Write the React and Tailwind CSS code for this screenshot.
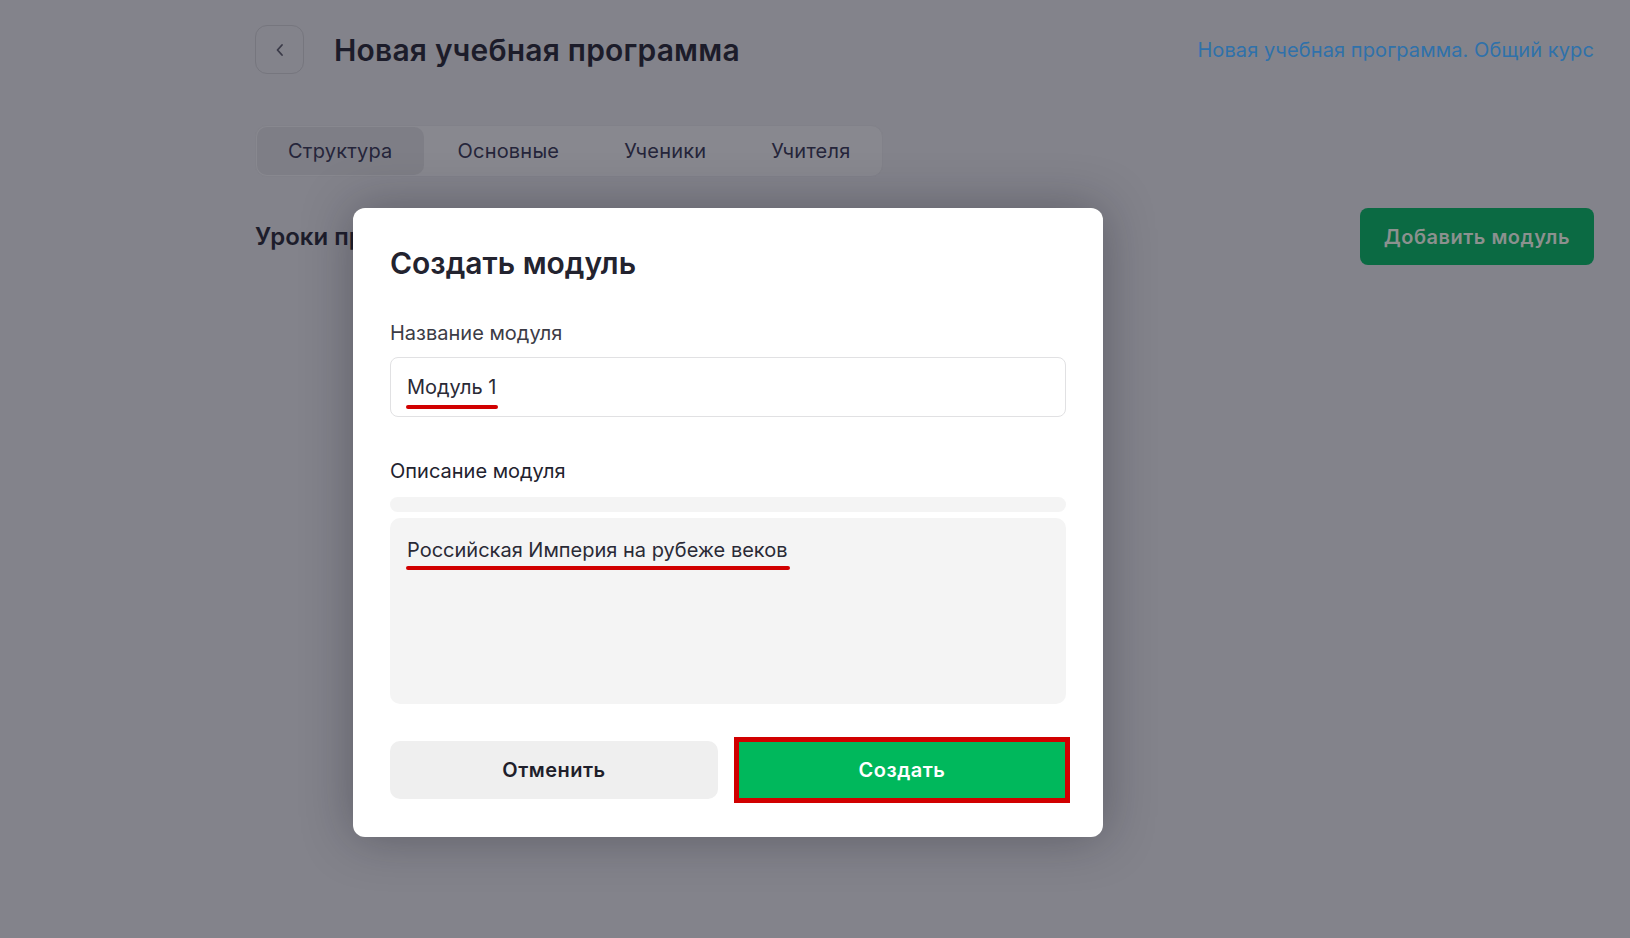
import React from "react";

const tabs = ["Структура", "Основные", "Ученики", "Учителя"];

function Underlined({ children, offset = "mt-[4px]" }) {
  return (
    <span className="relative inline-block">
      {children}
      <span className={`absolute -left-px -right-[2px] top-full ${offset} h-[4px] rounded-full bg-[#d10000]`} />
    </span>
  );
}

export default function App() {
  return (
    <div className="relative min-h-screen overflow-hidden bg-[#83838b] font-['Inter','Noto_Sans',sans-serif]">
      <div className="pl-[255px] pr-[36px] pt-[25px]">
        <div className="flex h-[49px] items-center justify-between">
          <div className="flex items-center">
            <button className="flex h-[49px] w-[49px] items-center justify-center rounded-xl border border-[#76767e]">
              <svg width="16" height="16" viewBox="0 0 16 16" fill="none">
                <path d="M10 3 L5.5 8 L10 13" stroke="#3a3a48" strokeWidth="1.8" strokeLinecap="round" strokeLinejoin="round" />
              </svg>
            </button>
            <h1 className="ml-[30px] text-[30px] font-semibold leading-9 tracking-[0.2px] text-[#1c1c2a]">Новая учебная программа</h1>
          </div>
          <a className="text-[20px] leading-7 tracking-[0.1px] text-[#2f71aa]">Новая учебная программа. Общий курс</a>
        </div>

        <div className="mt-[51px] inline-flex gap-[3px] rounded-xl border border-[#818189] bg-[#88888f] p-[1px]">
          {tabs.map((t, i) => (
            <div
              key={t}
              className={`flex h-[48px] items-center rounded-[10px] px-[31px] text-[20px] tracking-[0.2px] text-[#25253a] ${i === 0 ? "bg-[#7e7e86]" : ""}`}
            >
              {t}
            </div>
          ))}
        </div>

        <div className="mt-[31px] flex items-center justify-between">
          <h2 className="text-[24px] font-semibold text-[#1d1d2b]">Уроки программы</h2>
          <button className="h-[57px] rounded-lg bg-[#0b6a43] px-[24px] text-[20px] font-semibold tracking-wide text-[#8c918f]">
            Добавить модуль
          </button>
        </div>
      </div>

      <div className="absolute left-[353px] top-[208px] w-[750px] rounded-xl bg-white px-[37px] pb-[38px] pt-[37px] shadow-[0_0_50px_rgba(20,20,35,0.35)]">
        <h3 className="text-[30px] font-semibold leading-9 text-[#23232f]">Создать модуль</h3>

        <div className="mt-[38px] text-[20px] leading-7 text-[#3c3c46]">Название модуля</div>
        <div className="mt-[10px] flex h-[60px] items-center rounded-lg border border-[#e1e1e3] px-4 text-[20px] leading-7 text-[#2a2a36]">
          <Underlined>Модуль 1</Underlined>
        </div>

        <div className="mt-[40px] text-[20px] leading-7 text-[#22222e]">Описание модуля</div>
        <div className="mt-[12px] h-[15px] rounded-full bg-[#f4f4f4]" />
        <div className="mt-[6px] h-[186px] rounded-[10px] bg-[#f4f4f4] px-[17px] pt-[18px] text-[20px] leading-7 text-[#2a2a36]">
          <Underlined offset="mt-[2px]">Российская Империя на рубеже веков</Underlined>
        </div>

        <div className="mt-[37px] grid grid-cols-2 gap-[20px]">
          <button className="h-[58px] rounded-[10px] bg-[#efefef] text-[20px] font-semibold tracking-wide text-[#1f1f2b]">
            Отменить
          </button>
          <button className="h-[58px] bg-[#00b85c] text-[20px] font-semibold tracking-wide text-white outline-[5px] outline-solid outline-[#d10000] outline-offset-[-1px]">
            Создать
          </button>
        </div>
      </div>
    </div>
  );
}
